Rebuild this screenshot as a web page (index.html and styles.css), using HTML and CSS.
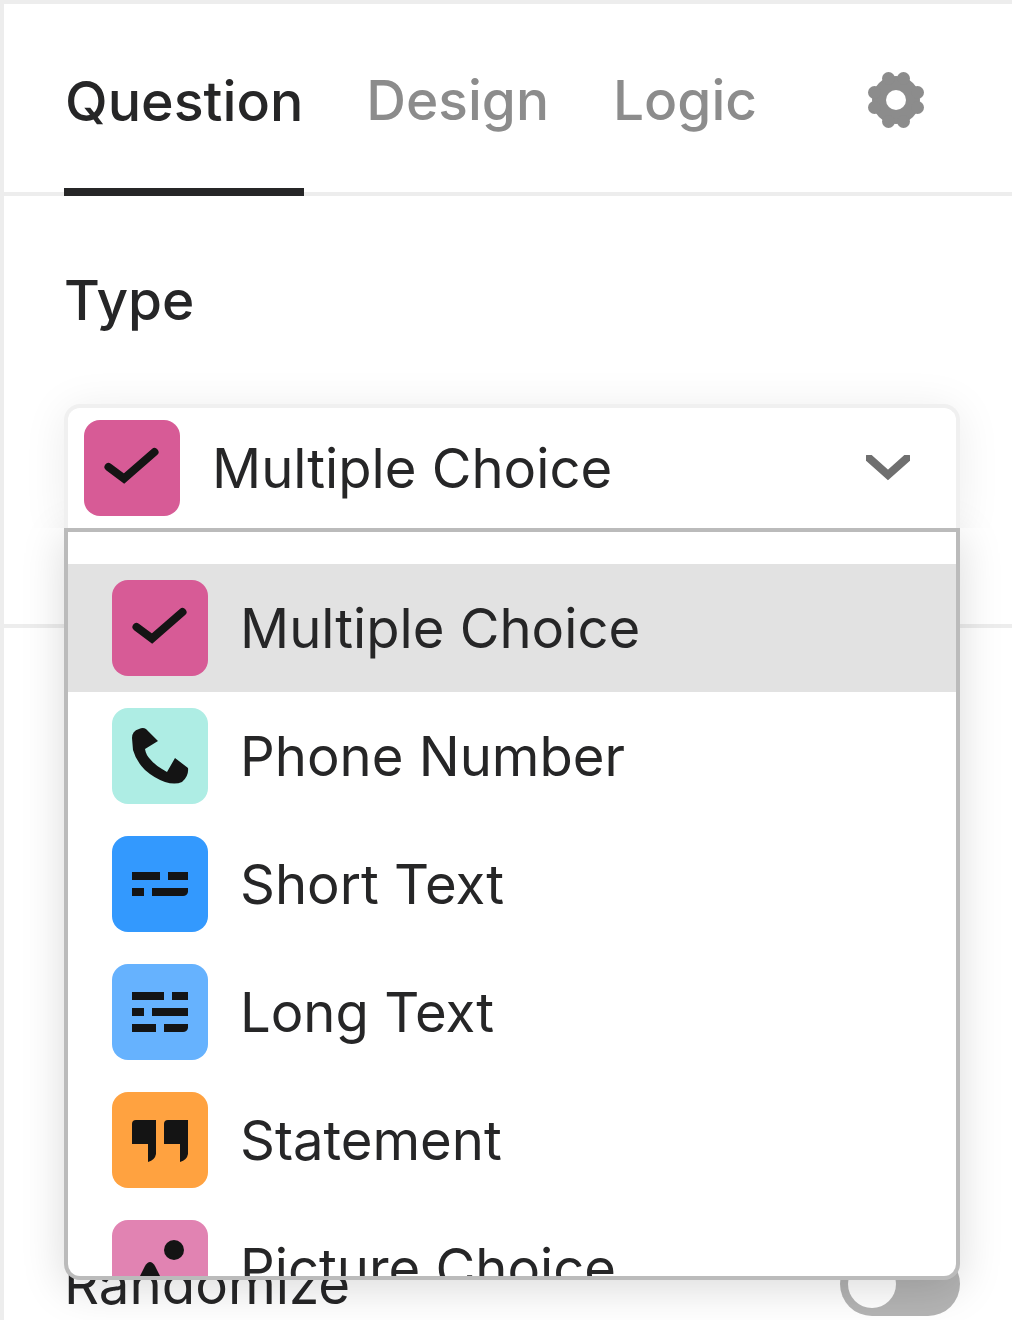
FILE: index.html
```html
<!DOCTYPE html>
<html lang="en">
<head>
<meta charset="utf-8">
<title>Question settings</title>
<link rel="stylesheet" href="styles.css">
</head>
<body>
<div class="panel">
  <nav class="tabs">
    <a class="tab active">Question</a>
    <a class="tab">Design</a>
    <a class="tab">Logic</a>
    <svg class="gear" viewBox="0 0 56 56" aria-hidden="true">
      <g fill="#8c8c8c">
        <circle cx="28" cy="28" r="24"/>
        <circle cx="20.5" cy="6.5" r="6.5"/><circle cx="35.5" cy="6.5" r="6.5"/>
        <circle cx="49.5" cy="20.5" r="6.5"/><circle cx="49.5" cy="35.5" r="6.5"/>
        <circle cx="35.5" cy="49.5" r="6.5"/><circle cx="20.5" cy="49.5" r="6.5"/>
        <circle cx="6.5" cy="35.5" r="6.5"/><circle cx="6.5" cy="20.5" r="6.5"/>
      </g>
      <circle cx="28" cy="28" r="10" fill="#fff"/>
    </svg>
  </nav>

  <section class="type-section">
    <h2 class="label">Type</h2>
    <div class="select">
      <div class="control">
        <span class="icon pink">
          <svg viewBox="0 0 96 96"><polyline class="check" points="24.5,47 40,58.5 70.5,32"/></svg>
        </span>
        <span class="control-text">Multiple Choice</span>
        <svg class="chevron" viewBox="0 0 44 26"><polyline points="3,3 22,20 41,3"/></svg>
      </div>
      <ul class="menu">
        <li class="option selected">
          <span class="icon pink"><svg viewBox="0 0 96 96"><polyline class="check" points="24.5,47 40,58.5 70.5,32"/></svg></span>
          <span>Multiple Choice</span>
        </li>
        <li class="option">
          <span class="icon teal"><svg viewBox="0 0 96 96"><path class="glyph" d="M20 30Q20 23 27 21Q31 19 34 21L46 33L33 41Q34 47 38 51Q43 57 50 61L55 64L63 50L76 60Q77 68 70 74Q63 77 53 74Q42 70 33 62Q24 53 21 42Z"/></svg></span>
          <span>Phone Number</span>
        </li>
        <li class="option">
          <span class="icon blue"><svg viewBox="0 0 96 96"><path class="glyph" d="M20 36H48V44H20ZM56 36H76V44H56ZM20 52H32V60H20ZM40 52H76V56Q75 60 71 60H40Z"/></svg></span>
          <span>Short Text</span>
        </li>
        <li class="option">
          <span class="icon sky"><svg viewBox="0 0 96 96"><path class="glyph" d="M20 28H52V36H20ZM60 28H76V36H60ZM20 44H32V52H20ZM40 44H76V52H40ZM20 60H44V68H20ZM52 60H76V64Q75 68 71 68H52Z"/></svg></span>
          <span>Long Text</span>
        </li>
        <li class="option">
          <span class="icon orange"><svg viewBox="0 0 96 96"><path class="glyph" d="M24 28H44V62Q43 68 36 70V52H20V32Q20 28 24 28ZM56 28H76V62Q75 68 68 70V52H52V32Q52 28 56 28Z"/></svg></span>
          <span>Statement</span>
        </li>
        <li class="option">
          <span class="icon rose"><svg viewBox="0 0 96 96"><circle class="glyph" cx="62" cy="30" r="10"/><path class="glyph" d="M14 84L33 46Q38 38 43 46L62 84Z"/></svg></span>
          <span>Picture Choice</span>
        </li>
      </ul>
    </div>
  </section>

  <section class="settings">
    <div class="setting-row">
      <span class="setting-name">Randomize</span>
      <span class="toggle"><span class="knob"></span></span>
    </div>
  </section>
</div>
</body>
</html>
```
FILE: styles.css
```css
* { box-sizing: border-box; }
html, body { margin: 0; height: 100%; overflow: hidden; background: #fff; }
body { font-family: Inter, "Liberation Sans", sans-serif; color: #262627; }

.panel {
  height: 1320px;
  border-top: 4px solid #ededed;
  border-left: 4px solid #ededed;
  display: flex;
  flex-direction: column;
  overflow: hidden;
}

.tabs {
  height: 192px;
  flex: none;
  padding-left: 60px;
  display: flex;
  align-items: stretch;
  gap: 60px;
  border-bottom: 4px solid #ededed;
  position: relative;
}
.tab {
  display: flex;
  align-items: center;
  justify-content: center;
  padding: 8px 2px 0;
  font-size: 55px;
  font-weight: 500;
  color: #8c8c8c;
  margin-bottom: -4px;
  border-bottom: 8px solid transparent;
}
.tab.active { color: #262627; border-bottom-color: #262627; font-size: 55.5px; padding: 8px 1px 0; }
.gear { width: 56px; height: 56px; margin: 68px 88px 0 auto; }

.type-section {
  height: 432px;
  flex: none;
  border-bottom: 4px solid #ededed;
  padding: 0 52px 0 60px;
}
.label {
  margin: 0;
  padding-top: 74px;
  height: 208px;
  font-size: 55px;
  line-height: 60px;
  font-weight: 500;
}

.select { position: relative; z-index: 2; }
.control {
  position: relative;
  z-index: 1;
  height: 124px;
  border: 4px solid #f0f0f0;
  border-bottom: 0;
  border-radius: 16px 16px 0 0;
  background: #fff;
  padding: 0 46px 0 16px;
  display: flex;
  align-items: center;
  gap: 32px;
  font-size: 54.4px;
  box-shadow: 0 4px 44px rgba(0,0,0,.08);
  clip-path: inset(-60px -60px 0 -60px);
}
.control-text { flex: 1; }
.chevron { width: 44px; height: 26px; }
.chevron polyline { fill: none; stroke: #6f6f6f; stroke-width: 8; stroke-linecap: round; stroke-linejoin: miter; }

.menu {
  position: absolute;
  left: 0;
  right: 0;
  top: 124px;
  height: 752px;
  margin: 0;
  padding: 32px 0 0;
  list-style: none;
  background: #fff;
  border: 4px solid #bbb;
  border-radius: 0 0 16px 16px;
  overflow: hidden;
  font-size: 54.4px;
  box-shadow: 0 8px 44px rgba(0,0,0,.15);
}
.option {
  height: 128px;
  padding: 0 44px;
  display: flex;
  align-items: center;
  gap: 32px;
}
.option.selected { background: #e2e2e2; }

.icon {
  width: 96px;
  height: 96px;
  flex: none;
  border-radius: 16px;
  overflow: hidden;
  display: block;
}
.icon svg { display: block; width: 96px; height: 96px; }
.pink { background: #d75b96; }
.teal { background: #aeede4; }
.blue { background: #3399fe; }
.sky { background: #66b2fe; }
.orange { background: #ffa240; }
.rose { background: #e183b2; }
.glyph { fill: #141414; }
.check { fill: none; stroke: #141414; stroke-width: 8; stroke-linejoin: miter; stroke-linecap: round; }

.settings { flex: 1; padding: 0 52px 0 60px; position: relative; }
.setting-row {
  height: 64px;
  margin-top: 624px;
  display: flex;
  align-items: center;
  justify-content: space-between;
  font-size: 54.6px;
}
.setting-name { font-weight: 400; }
.toggle {
  width: 120px;
  height: 64px;
  border-radius: 32px;
  background: #b4b4b4;
  padding: 8px;
  display: block;
}
.knob { display: block; width: 48px; height: 48px; border-radius: 50%; background: #fff; }
```
